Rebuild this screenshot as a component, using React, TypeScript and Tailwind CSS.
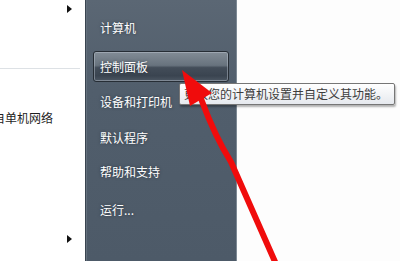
import React from 'react';

const font = "font-['Microsoft_YaHei','Noto_Sans_CJK_SC',sans-serif]";

const menuItems = [
  { label: '计算机', mt: 'mt-[12px]' },
  { label: '控制面板', mt: 'mt-[7px]', active: true },
  { label: '设备和打印机', mt: 'mt-[4px]' },
  { label: '默认程序', mt: 'mt-[4px]' },
  { label: '帮助和支持', mt: 'mt-[2px]' },
  { label: '运行...', mt: 'mt-[6px]' },
];

// small black "submenu" triangle
const SubArrow = () => (
  <svg width="5" height="8" viewBox="0 0 5 8">
    <polygon points="0,0 5,4 0,8" fill="#111" />
  </svg>
);

const MenuItem = ({ label, mt, active }: { label: string; mt: string; active?: boolean }) => (
  <div
    className={`${mt} flex items-center rounded-[3px] pl-[6px] text-[12px] text-white ${
      active
        ? 'h-[31px] border border-[#262d35] bg-[linear-gradient(180deg,#828c96_0%,#68737e_46%,#434d59_54%,#3a4450_82%,#4c5763_100%)] shadow-[inset_0_0_0_1px_rgba(190,200,210,0.45)]'
        : 'h-[32px] border border-transparent'
    }`}
  >
    <span className="[text-shadow:0_0_3px_rgba(20,30,40,0.6)]">{label}</span>
  </div>
);

export default function App() {
  return (
    <div className={`relative flex h-[261px] w-[400px] overflow-hidden bg-white ${font}`}>
      {/* left white column of the start menu */}
      <div className="flex w-[85px] flex-col bg-white">
        <div className="flex h-[68px] justify-end pr-[13px] pt-[5px]">
          <SubArrow />
        </div>
        <div className="h-px w-[80px] bg-[#dde1e5]" />
        <div className="mt-[42px] -ml-[7px] whitespace-nowrap text-[12px] leading-[14px] text-[#1e1e1e]">
          自单机网络
        </div>
        <div className="mt-auto mb-[18px] flex justify-end pr-[13px]">
          <SubArrow />
        </div>
      </div>

      {/* dark right pane */}
      <div className="w-[152px] border-l border-l-[#394450] border-r border-r-[#7d8994] bg-[linear-gradient(180deg,#5b6774_0%,#515e6c_35%,#4d5a68_100%)] px-[7px] shadow-[inset_1px_0_0_#64707c]">
        {menuItems.map((item) => (
          <MenuItem key={item.label} {...item} />
        ))}
      </div>

      {/* desktop area */}
      <div className="flex-1 bg-[#fdfdfd]" />

      {/* tooltip */}
      <div className="absolute left-[179px] top-[83px] flex h-[22px] w-[216px] items-center rounded-[2px] border border-[#767676] bg-[linear-gradient(180deg,#ffffff_0%,#e6e9ee_100%)] pl-[4px] text-[12px] text-[#3d3d3d] shadow-[1px_2px_2px_rgba(0,0,0,0.3)] whitespace-nowrap">
        更改您的计算机设置并自定义其功能。
      </div>

      {/* red pointer arrow */}
      <svg className="pointer-events-none absolute left-0 top-0" width="400" height="261" viewBox="0 0 400 261">
        <path
          d="M200 96 C206 112 214 135 231 162 L276 264"
          stroke="#f00c0c"
          strokeWidth="6"
          fill="none"
          strokeLinecap="round"
        />
        <polygon points="182,70 190,106 212,93" fill="#f00c0c" />
      </svg>
    </div>
  );
}
